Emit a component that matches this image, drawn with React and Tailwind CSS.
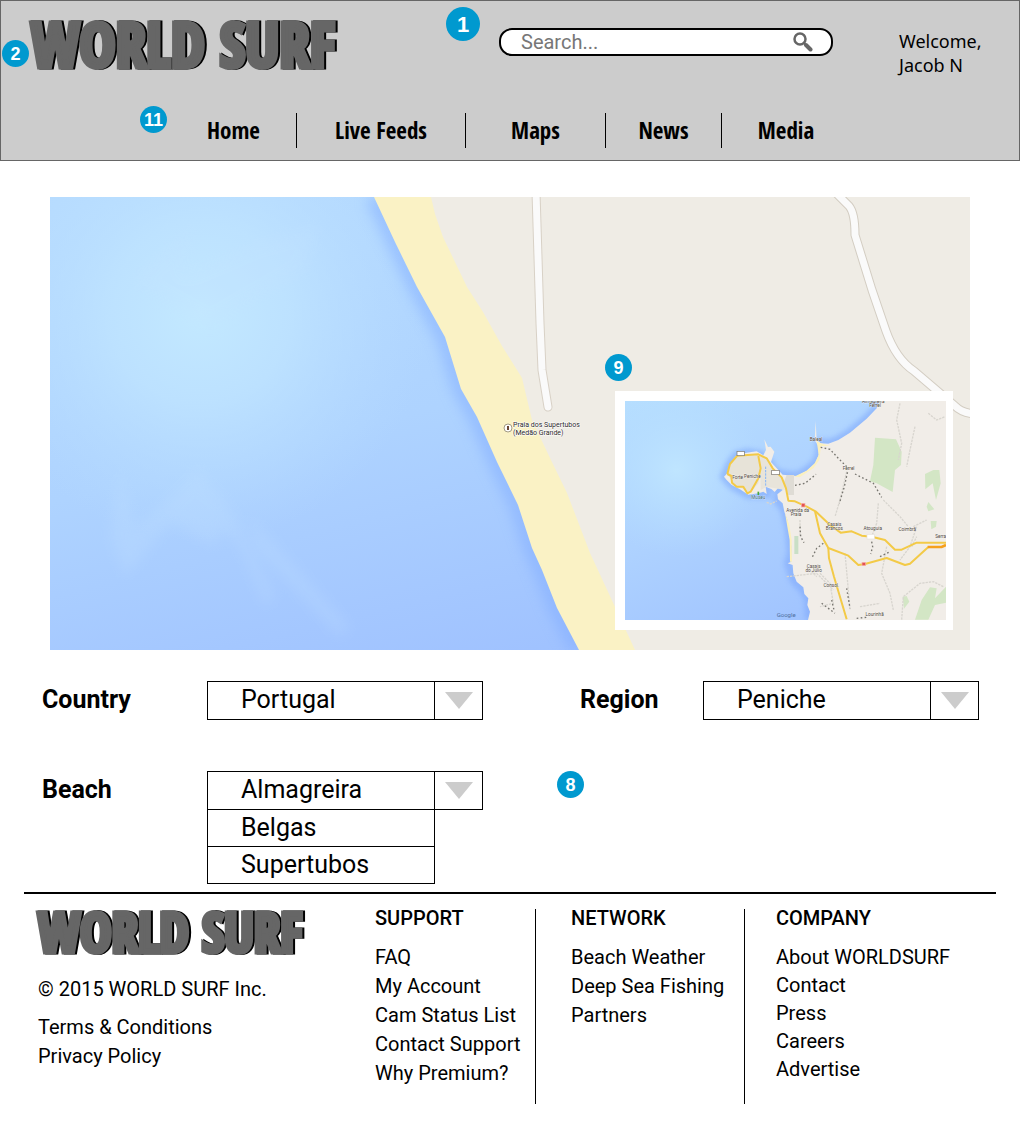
import React from "react";

const navItems = ["Home", "Live Feeds", "Maps", "News", "Media"];

function Badge({ n, className }) {
  return (
    <span
      className={`absolute flex items-center justify-center rounded-full bg-[#0099cf] font-['Liberation_Sans'] font-bold text-white ${className}`}
    >
      {n}
    </span>
  );
}

function Logo({ className }) {
  return (
    <a
      href="#home"
      className={`block whitespace-nowrap font-['Open_Sans_Condensed','Noto_Sans_Condensed','Roboto_Condensed','Roboto',sans-serif] font-black text-[#666] ${className}`}
    >
      WORLD SURF
    </a>
  );
}

function Caret() {
  return (
    <svg viewBox="0 0 28 17" className="h-[17px] w-7" aria-hidden="true">
      <path d="M0 0H28L14 17Z" fill="#cccccc" />
    </svg>
  );
}

function SelectBox({ id, options }) {
  return (
    <div className="grid h-[39px] w-[276px] grid-cols-[1fr_48px] border border-black">
      <select
        id={id}
        className="col-start-1 col-end-3 row-start-1 w-full appearance-none bg-transparent pb-0.5 pl-[33px] text-[25px] leading-8 text-black outline-none"
      >
        {options.map((o) => (
          <option key={o}>{o}</option>
        ))}
      </select>
      <span className="pointer-events-none col-start-2 row-start-1 flex items-center justify-center border-l border-black">
        <Caret />
      </span>
    </div>
  );
}

function InsetMap() {
  return (
    <svg x="575" y="204" width="321" height="219" viewBox="75 183 963 657" preserveAspectRatio="none">
      <rect x="75" y="183" width="963" height="657" fill="url(#insetSea)" />
      <rect x="75" y="183" width="963" height="657" fill="url(#insetGlow)" />
      <path
        d="M836 183L836 198L800 236L750 278L715 300L685 311L660 308L658 345L646 370L620 392L590 408L548 404L520 392L505 365L483 345L440 338L410 345L390 372L373 410L395 435L445 464L500 462L498 440L540 436L532 480L555 510L568 570L574 640L565 670L582 720L610 750L625 775L628 840"
        fill="none"
        stroke="#7fa8fb"
        strokeWidth="26"
        opacity=".6"
        filter="url(#soft)"
      />
      <path
        d="M1038 183H838L830 205L800 236L750 278L715 300L685 311L662 310L650 300L647 243L644 300L656 320L656 345L646 370L620 392L590 408L548 404L535 390L513 366L523 335L512 320L504 321L493 298L498 330L490 346L470 334L440 338L410 345L390 372L380 402L372 410L380 420L395 435L420 448L445 464L475 460L490 455L500 462L497 440L515 448L524 456L540 437L548 450L532 463L534 478L548 490L553 515L562 540L568 570L574 620L574 665L563 670L578 675L580 700L590 725L610 742L613 762L625 775L622 795L630 815L624 840H1038Z"
        fill="#f1ede8"
      />
      <path d="M662 310L650 302L656 345L644 370L620 392L582 410L600 411L640 385L658 360L663 318L690 318Z" fill="#fbf0be" />
      <path d="M555 518L562 560L569 600L570 665L576 665L575 600L568 555Z" fill="#fbf0be" />
      <path d="M382 400L395 368L412 347L470 342L480 350L482 390L475 430L450 458L425 445L400 432Z" fill="#e7e3d8" />
      <path d="M480 350L500 352L520 385L545 410L555 450L500 440L482 450Z" fill="#e8e4da" />
      <path d="M560 405H582V465H565L552 425Z" fill="#dfdcd5" />
      <g fill="#d3e6c5">
        <path d="M825 293L888 298L905 335L903 375L885 390L878 456L830 430L810 424L820 375Z" />
        <path d="M975 402L1000 390H1018L1022 430L1008 480L998 430L976 448Z" />
        <path d="M985 486L1003 508L985 514L980 500Z" />
        <path d="M992 543H1010L1008 560L994 568Z" />
        <path d="M945 839L965 780L990 742L1010 745L1005 775L1038 740V788L1005 795L985 839Z" />
        <path d="M908 770L920 768L928 785L912 806Z" />
        <path d="M583 588H595V642H583Z" fill="#c9dfc6" />
      </g>
      <path
        d="M500 487L512 492L530 483M740 395L720 480L705 530M835 490L830 550L815 590M850 480L900 530L925 560M900 190L890 240L905 310L895 360M945 260L930 330L920 380M600 540L600 590M735 640L745 750L750 810M660 700L690 730L700 790L660 800M860 620L845 700L870 760L880 810M905 839L910 770L960 730L1000 725L1030 740M950 560L930 620L900 660M560 710L650 700L700 750M940 560L980 540M985 220L1010 240L1035 230M620 680L650 710M780 800L840 790M935 620L950 590"
        fill="none"
        stroke="#d8d5cf"
        strokeWidth="4"
        strokeDasharray="7 3"
      />
      <path
        d="M662 322L690 328L715 355L745 385M745 385L733 440L718 490M765 402L820 430L845 472M585 436L615 430L648 403M600 560L602 590L612 608M670 610L650 625L635 655M815 605L818 620L812 642M840 650L870 635M740 745L750 805M665 790L705 820M695 780L702 810M770 835L800 832"
        fill="none"
        stroke="#77756f"
        strokeWidth="4"
        strokeDasharray="5 7"
      />
      <path d="M497 380V440" stroke="#85b6f8" strokeWidth="3" strokeDasharray="7 3" />
      <g fill="none" stroke="#f3ca47" strokeWidth="6" strokeLinejoin="round">
        <path d="M382 402L390 372L412 347L475 343L500 355L518 385L545 412L558 445L565 482L585 484L620 500L648 515L690 555L722 578L755 574L785 587L815 590L855 600L885 629H905L950 608H1038" />
        <path d="M382 402L394 408L396 428L410 440L430 440L442 460L452 455L475 415L482 385L475 348" />
        <path d="M645 514L660 580L685 624L745 647L775 675L795 672L860 654L915 675L930 671L985 621" />
        <path d="M685 624L687 655L702 710L740 838" />
      </g>
      <path d="M983 621H1025L1038 615" fill="none" stroke="#f5a01c" strokeWidth="8" />
      <g fill="#ffffff" stroke="#77736b" strokeWidth="2">
        <rect x="411" y="334" width="22" height="13" />
        <rect x="515" y="391" width="23" height="13" />
        <rect x="801" y="583" width="22" height="14" stroke="#e6e2dc" />
      </g>
      <g fill="#e4534f" stroke="#f5b5ae" strokeWidth="2">
        <rect x="604" y="490" width="11" height="11" />
        <rect x="786" y="667" width="11" height="10" />
      </g>
      <path d="M475 455V465" stroke="#4aa83a" strokeWidth="5" />
      <g fontFamily="Roboto, sans-serif" fontSize="14" fill="#4a4236" stroke="#ffffff" strokeWidth="1" paintOrder="stroke" textAnchor="middle">
        <text x="820" y="188">Almagreira</text>
        <text x="825" y="200">Ferrel</text>
        <text x="648" y="304">Baleal</text>
        <text x="746" y="390">Ferrel</text>
        <text x="457" y="414">Peniche</text>
        <text x="413" y="416">Forte</text>
        <text x="475" y="478" fill="#2d6375">Museu</text>
        <text x="593" y="515">Avenida da</text>
        <text x="588" y="528">Praia</text>
        <text x="703" y="559">Casais</text>
        <text x="703" y="571">Brancos</text>
        <text x="818" y="569">Atouguia</text>
        <text x="922" y="573">Coimbrã</text>
        <text x="1022" y="594">Serra</text>
        <text x="641" y="685">Casais</text>
        <text x="641" y="697">do Júlio</text>
        <text x="694" y="741">Consol.</text>
        <text x="824" y="827">Lourinhã</text>
      </g>
      <text x="530" y="832" fontFamily="Roboto, sans-serif" fontSize="18" fill="#4f6f9e">
        Google
      </text>
    </svg>
  );
}

function BeachMap() {
  return (
    <svg viewBox="0 0 920 453" className="block h-auto w-full" role="img" aria-label="Map of Praia dos Supertubos">
      <defs>
        <linearGradient id="sea" x1="0.1" y1="0" x2="0.6" y2="1">
          <stop offset="0" stopColor="#b6dbff" />
          <stop offset="0.5" stopColor="#aed3ff" />
          <stop offset="1" stopColor="#9fc1ff" />
        </linearGradient>
        <radialGradient id="glow" gradientUnits="userSpaceOnUse" cx="150" cy="115" r="230">
          <stop offset="0" stopColor="#c3e9ff" />
          <stop offset="0.4" stopColor="#bfe4ff" stopOpacity="0.8" />
          <stop offset="1" stopColor="#b6dbff" stopOpacity="0" />
        </radialGradient>
        <linearGradient id="insetSea" x1="0" y1="0" x2="0.6" y2="1">
          <stop offset="0" stopColor="#b6deff" />
          <stop offset="0.5" stopColor="#aed2ff" />
          <stop offset="1" stopColor="#a0c3ff" />
        </linearGradient>
        <radialGradient id="insetGlow" gradientUnits="userSpaceOnUse" cx="230" cy="390" r="260">
          <stop offset="0" stopColor="#bfe5ff" />
          <stop offset="1" stopColor="#b6deff" stopOpacity="0" />
        </radialGradient>
        <filter id="soft" x="-20%" y="-20%" width="140%" height="140%">
          <feGaussianBlur stdDeviation="8" />
        </filter>
        <filter id="haze" x="-20%" y="-20%" width="140%" height="140%">
          <feGaussianBlur stdDeviation="7" />
        </filter>
        <clipPath id="mapEdge">
          <rect width="920" height="453" />
        </clipPath>
      </defs>
      <g clipPath="url(#mapEdge)">
        <rect width="920" height="453" fill="url(#sea)" />
        <rect width="920" height="453" fill="url(#glow)" />
        <g fill="#c3e2ff" opacity="0.25" filter="url(#haze)">
          <path d="M80 85L145 25L135 75L205 45L270 28L255 75L160 130Z" />
          <path d="M60 340L70 270L85 330L110 310L150 270L175 320L165 350L120 325L75 380Z" />
          <path d="M165 290L185 320L225 400L215 410L190 350L150 310Z" />
          <path d="M200 320L300 430L290 440L205 350Z" />
        </g>
        <path
          d="M324 0L367 90L395 140L411 192L427 220L447 265L468 308L482 351L492 373L507 411L529 453"
          fill="none"
          stroke="#7faaff"
          strokeWidth="16"
          opacity="0.55"
          filter="url(#haze)"
        />
        <path
          d="M324 0L345 45L367 90L395 140L411 192L427 220L447 265L468 308L482 351L492 373L507 411L529 453H920V0Z"
          fill="#faf2c5"
        />
        <path
          d="M381 0L385 17L393 40L417 90L433 115L452 149L472 181L482 223L500 261L517 296L540 356L585 453H920V0Z"
          fill="#efece5"
        />
        <g fill="none" strokeLinecap="round" strokeLinejoin="round">
          <path d="M486 -5L490 126L492 173L498 210" stroke="#d8d1c6" strokeWidth="9" />
          <path d="M486 -5L490 126L492 173L498 210" stroke="#fafafa" strokeWidth="7" />
          <path d="M785 -5L799 9Q805 16 805 38L822 93L836 134Q846 162 864 174L905 209Q912 216 925 217" stroke="#d3cdc2" strokeWidth="9" />
          <path d="M785 -5L799 9Q805 16 805 38L822 93L836 134Q846 162 864 174L905 209Q912 216 925 217" stroke="#fafafa" strokeWidth="7" />
        </g>
        <circle cx="458" cy="231" r="4" fill="#ffffff" stroke="#a39b83" />
        <path d="M458 229V233" stroke="#6b4632" strokeWidth="2" />
        <g fontFamily="Roboto, sans-serif" fontSize="7" fill="#2c2828" stroke="#ffffff" strokeWidth="1" paintOrder="stroke">
          <text x="463" y="230">Praia dos Supertubos</text>
          <text x="463" y="238">(Medão Grande)</text>
        </g>
        <rect x="565" y="194" width="338" height="239" fill="#ffffff" />
        <InsetMap />
      </g>
    </svg>
  );
}

function LinkColumn({ title, links, className, rowClass }) {
  return (
    <div className={className}>
      <h2 className="mb-[13px] text-xl leading-6 font-medium">{title}</h2>
      <ul>
        {links.map((l) => (
          <li key={l} className={rowClass}>
            <a href="#link">{l}</a>
          </li>
        ))}
      </ul>
    </div>
  );
}

export default function App() {
  return (
    <div className="bg-white font-['Roboto',sans-serif] text-black">
      <header className="relative border border-[#666] bg-[#cccccc] pb-3">
        <div className="flex items-start pt-2.5 pr-9 pl-[30px]">
          <Logo className="w-[305px] text-[61px] leading-[66px] [-webkit-text-stroke:5px_#666] [filter:drop-shadow(2px_0_0_#000)]" />
          <form className="mt-[17px] ml-[163px] flex h-7 flex-1 items-center rounded-[13px] border-2 border-black bg-white pr-[18px] pl-5">
            <input
              type="search"
              aria-label="Search"
              placeholder="Search..."
              className="min-w-0 flex-1 text-xl leading-6 outline-none placeholder:text-[#777]"
            />
            <button type="submit" aria-label="Submit search">
              <svg viewBox="0 0 20 20" className="size-5" fill="none" stroke="#666">
                <circle cx="7" cy="7" r="5.500" strokeWidth="2.500" />
                <path d="M11 11L13 13" strokeWidth="2" />
                <path d="M13 13L17.500 17.500" strokeWidth="4" strokeLinecap="round" />
              </svg>
            </button>
          </form>
          <p className="mt-[18px] ml-[66px] w-[84px] font-['Noto_Sans',sans-serif] text-lg leading-6">
            Welcome, Jacob N
          </p>
        </div>
        <nav className="mt-9 grid grid-cols-[126fr_169fr_140fr_116fr_128fr] divide-x divide-black pr-[169px] pl-[170px]">
          {navItems.map((item) => (
            <a
              key={item}
              href="#nav"
              className="flex h-[35px] items-center justify-center font-['Open_Sans_Condensed','Noto_Sans_Condensed','Roboto_Condensed','Roboto',sans-serif] text-[23px] font-bold whitespace-nowrap"
            >
              {item}
            </a>
          ))}
        </nav>
        <Badge n="1" className="top-1.5 left-[445px] size-[34px] text-[22px]" />
        <Badge n="2" className="top-[39px] left-px size-[27px] text-lg" />
        <Badge n="11" className="top-[105px] left-[139px] size-[27px] text-lg" />
      </header>

      <main>
        <div className="relative mx-[50px] mt-9">
          <BeachMap />
          <Badge n="9" className="top-[157px] left-[555px] size-[27px] text-lg" />
        </div>

        <form className="relative mt-[31px] grid grid-cols-[165px_1fr_123px_276px] items-start gap-y-[51px] pr-[41px] pl-[42px]">
          <label htmlFor="country" className="pt-[3px] text-[25px] leading-8 font-bold">Country</label>
          <SelectBox id="country" options={["Portugal"]} />
          <label htmlFor="region" className="pt-[3px] text-[25px] leading-8 font-bold">Region</label>
          <SelectBox id="region" options={["Peniche"]} />
          <label htmlFor="beach" className="pt-[3px] text-[25px] leading-8 font-bold">Beach</label>
          <div>
            <SelectBox id="beach" options={["Almagreira", "Belgas", "Supertubos"]} />
            <ul className="-mt-px w-[228px] divide-y divide-black border border-black text-[25px]">
              {["Belgas", "Supertubos"].map((o) => (
                <li key={o}>
                  <button type="button" className="block w-full pl-[33px] text-left leading-9">
                    {o}
                  </button>
                </li>
              ))}
            </ul>
          </div>
          <Badge n="8" className="top-[90px] left-[557px] size-[27px] text-lg" />
        </form>
      </main>

      <footer className="mx-6 mt-2 grid grid-cols-[512fr_209fr_251fr] border-t-2 border-black pt-[15px] text-xl">
        <div className="grid grid-cols-[337px_1fr] border-r border-black">
          <div className="pl-3.5">
            <Logo className="text-[53px] leading-[46px] [-webkit-text-stroke:5px_#666] [filter:drop-shadow(2px_0_0_#000)]" />
            <p className="mt-[22px] leading-6">© 2015 WORLD SURF Inc.</p>
            <ul className="mt-3 leading-[29px]">
              <li><a href="#terms">Terms &amp; Conditions</a></li>
              <li><a href="#privacy">Privacy Policy</a></li>
            </ul>
          </div>
          <LinkColumn
            className="-mt-[3px] h-[198px] pl-[14px] whitespace-nowrap"
            title="SUPPORT"
            rowClass="leading-[29px]"
            links={["FAQ", "My Account", "Cam Status List", "Contact Support", "Why Premium?"]}
          />
        </div>
        <div className="border-r border-black">
          <LinkColumn
            className="-mt-[3px] pl-[35px] whitespace-nowrap"
            title="NETWORK"
            rowClass="leading-[29px]"
            links={["Beach Weather", "Deep Sea Fishing", "Partners"]}
          />
        </div>
        <LinkColumn
          className="-mt-[3px] pl-[31px] whitespace-nowrap"
          title="COMPANY"
          rowClass="leading-7"
          links={["About WORLDSURF", "Contact", "Press", "Careers", "Advertise"]}
        />
      </footer>
    </div>
  );
}
